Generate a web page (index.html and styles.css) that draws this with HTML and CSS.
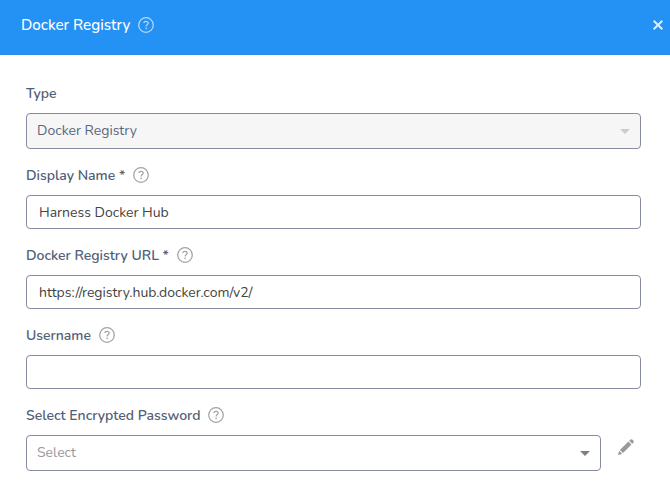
FILE: index.html
```html
<!DOCTYPE html>
<html lang="en">
<head>
<meta charset="utf-8">
<title>Docker Registry</title>
<link rel="stylesheet" href="styles.css">
</head>
<body>
<svg width="0" height="0" class="defs" aria-hidden="true">
<symbol id="help" viewBox="0 0 16 16"><circle cx="8" cy="8" r="7.3" fill="none" stroke="currentColor" stroke-width="1.25"/><path d="M5.9 6.1C5.9 3.6 10.2 3.7 10.2 6.1C10.2 7.6 8.1 7.5 8.1 9.5" fill="none" stroke="currentColor" stroke-width="1.25"/><circle cx="8.1" cy="11.4" r=".8" fill="currentColor"/></symbol>
</svg>
<header class="header">
<h1 class="title">Docker Registry</h1>
<svg class="help"><use href="#help"/></svg>
<svg class="close" viewBox="0 0 10 10"><path d="M.7.7L9.3 9.3M9.3.7L.7 9.3"/></svg>
</header>
<main class="form">
<section class="group">
<div class="label"><span>Type</span></div>
<div class="field select disabled"><span>Docker Registry</span><i class="arrow"></i></div>
</section>
<section class="group">
<div class="label"><span>Display Name *</span><svg class="help"><use href="#help"/></svg></div>
<div class="field"><span>Harness Docker Hub</span></div>
</section>
<section class="group">
<div class="label"><span>Docker Registry URL *</span><svg class="help"><use href="#help"/></svg></div>
<div class="field"><span>https://registry.hub.docker.com/v2/</span></div>
</section>
<section class="group">
<div class="label"><span>Username</span><svg class="help"><use href="#help"/></svg></div>
<div class="field"></div>
</section>
<section class="group">
<div class="label"><span>Select Encrypted Password</span><svg class="help"><use href="#help"/></svg></div>
<div class="row">
<div class="field select"><span class="placeholder">Select</span><i class="arrow"></i></div>
<svg class="pencil" viewBox="0 0 16 16"><path d="M0 16L1.1 11.8L4.2 14.9ZM1.9 11L10.4 2.5L13.5 5.6L5 14.1ZM11.2 1.7L12.2.7Q13.3-.3 14.6.8L15.2 1.4Q16.3 2.6 15.3 3.8L14.3 4.8Z"/></svg>
</div>
</section>
</main>
</body>
</html>
```
FILE: styles.css
```css
* { box-sizing: border-box; }
body {
  margin: 0;
  height: 481px;
  overflow: hidden;
  background: #fff;
  color: #434343;
  font: 14px/20px Nunito, Lato, "Open Sans", sans-serif;
}
.defs { position: absolute; }
.header {
  display: flex;
  align-items: center;
  height: 55px;
  padding: 0 7px 4px 21px;
  background: #2491f4;
  border-bottom: 1px solid #2b8ee9;
  color: #fff;
}
.title { margin: 0; width: 117px; font-size: 15.2px; font-weight: 500; white-space: nowrap; }
.help { flex: none; width: 16px; height: 16px; color: #a2a2a2; }
.header .help { color: #b5d9fb; }
.close { width: 10px; height: 10px; margin-left: auto; fill: none; stroke: #d9efff; stroke-width: 2; }
.form { display: flex; flex-direction: column; gap: 16px; padding: 28px 29px 0 26px; }
.group { display: flex; flex-direction: column; gap: 10px; }
.label { display: flex; align-items: center; gap: 8px; height: 20px; color: #526076; font-weight: 600; white-space: nowrap; }
.label span { padding-top: 2px; }
.field {
  display: flex;
  align-items: center;
  height: 34px;
  padding: 2px 12px 0;
  border: 1px solid #868b9f;
  border-radius: 4px;
  white-space: nowrap;
}
.select { height: 36px; padding: 0 10px; justify-content: space-between; }
.disabled { background: #f6f6f6; color: #5c667b; }
.arrow { border: 5px solid transparent; border-top-color: #808080; border-bottom: 0; }
.disabled .arrow { border-top-color: #ccc; }
.placeholder { color: #999; }
.row { display: flex; }
.row .field { width: 575px; }
.pencil { width: 16px; height: 16px; margin: 4px 0 0 17px; fill: #999; }
```
